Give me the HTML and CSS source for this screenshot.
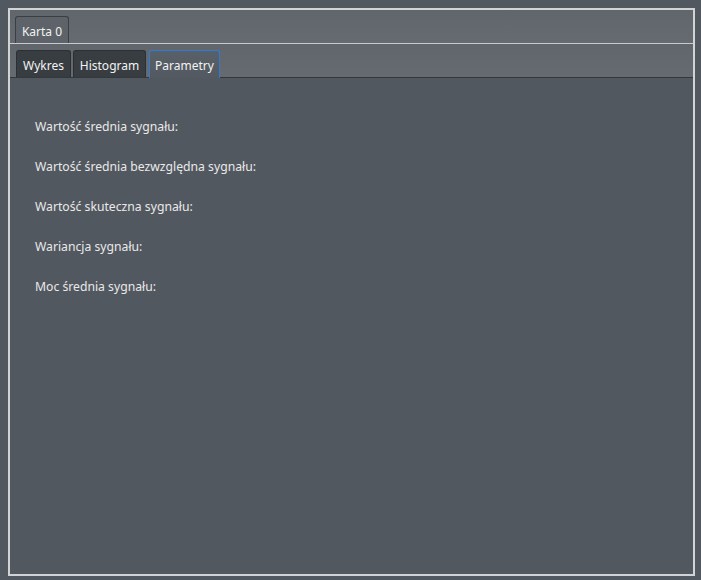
FILE: index.html
```html
<!DOCTYPE html>
<html>
<head>
<meta charset="utf-8">
<link rel="stylesheet" href="styles.css">
</head>
<body>
<div class="frame">
  <div class="tabbar outer-bar">
    <div class="tab outer-tab">Karta 0</div>
  </div>
  <div class="inner">
    <div class="tabbar inner-bar">
      <div class="tab dark">Wykres</div>
      <div class="tab dark">Histogram</div>
      <div class="tab selected">Parametry</div>
    </div>
    <div class="content">
      <div class="row">Wartość średnia sygnału:</div>
      <div class="row">Wartość średnia bezwzględna sygnału:</div>
      <div class="row">Wartość skuteczna sygnału:</div>
      <div class="row">Wariancja sygnału:</div>
      <div class="row">Moc średnia sygnału:</div>
    </div>
  </div>
</div>
</body>
</html>
```
FILE: styles.css
```css
html, body {
  margin: 0;
  padding: 0;
  background: #525860;
  font-family: "Noto Sans", "Open Sans", sans-serif;
  font-size: 12px;
  color: #eeeeee;
}
.frame {
  box-sizing: border-box;
  margin: 8px;
  width: 687px;
  height: 568px;
  border: 2px solid #d2d3d4;
  display: flex;
  flex-direction: column;
}
.tabbar {
  display: flex;
  align-items: flex-end;
  background: linear-gradient(#60666c, #656b71);
}
.outer-bar {
  height: 33px;
  padding-left: 5px;
  border-bottom: 1px solid #c9cacb;
}
.tab {
  box-sizing: border-box;
  height: 27px;
  display: flex;
  align-items: center;
  justify-content: center;
  border: 1px solid #3a3f44;
  border-bottom: none;
  border-radius: 3px 3px 0 0;
  color: #f2f2f2;
}
.outer-tab {
  width: 54px;
  background: #5d6369;
  padding-top: 2px;
}
.inner {
  flex: 1;
  display: flex;
  flex-direction: column;
}
.inner-bar {
  height: 33px;
  padding-left: 6px;
  gap: 2px;
  border-bottom: 1px solid #33383c;
}
.tab.dark {
  background: #383d42;
  border-color: #2c3034;
  padding-top: 2px;
}
.inner-bar .tab:nth-child(1) { width: 55px; }
.inner-bar .tab:nth-child(2) { width: 73px; }
.tab.selected {
  width: 71px;
  height: 28px;
  margin-bottom: -1px;
  margin-left: 1px;
  background: linear-gradient(#5a6067, #535960);
  border: 1px solid #2f7ad2;
  border-bottom: none;
  padding-top: 1px;
}
.content {
  flex: 1;
  background: #525860;
  padding: 41px 0 0 25px;
  display: flex;
  flex-direction: column;
  gap: 24px;
  font-size: 12.2px;
  color: #e9e9e9;
}
.row {
  line-height: 16px;
  height: 16px;
}
```
